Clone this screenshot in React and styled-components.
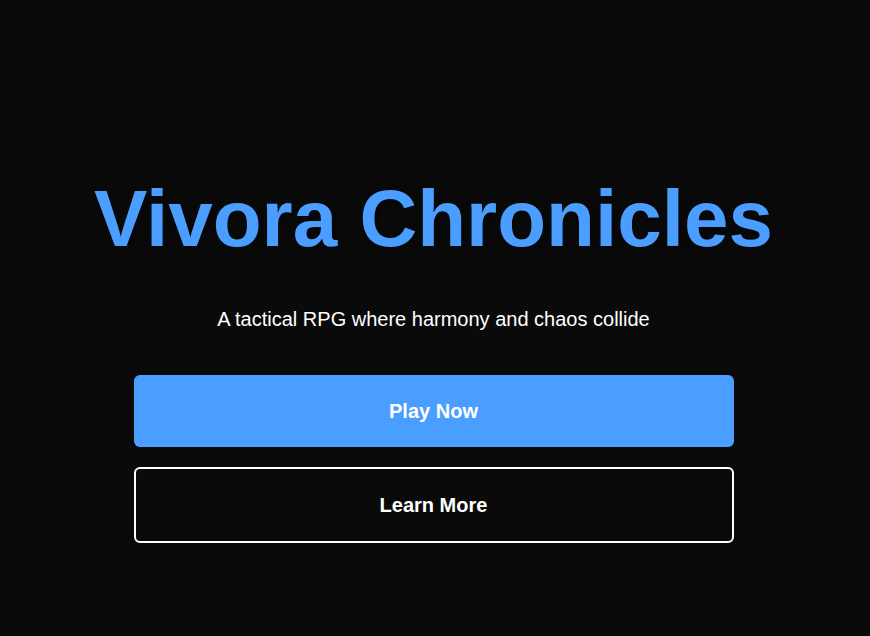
import React from 'react';
import styled, { createGlobalStyle } from 'styled-components';

const GlobalStyle = createGlobalStyle`
  * {
    box-sizing: border-box;
  }
  body {
    margin: 0;
    background: #0a0a0a;
    color: #ffffff;
    font-family: 'Liberation Sans', Arial, sans-serif;
  }
`;

export default function App() {
  return (
    <>
      <GlobalStyle />
      <Landing>
        <Title>Vivora Chronicles</Title>
        <Tagline>A tactical RPG where harmony and chaos collide</Tagline>
        <Actions>
          <ActionButton primary>Play Now</ActionButton>
          <ActionButton>Learn More</ActionButton>
        </Actions>
      </Landing>
    </>
  );
}

const Landing = styled.main`
  min-height: 100vh;
  padding: 80px 3px 0 0;
  display: flex;
  flex-direction: column;
  align-items: center;
  justify-content: center;
  text-align: center;
`;

const Title = styled.h1`
  margin: 0 0 43px;
  font-size: 80px;
  font-weight: bold;
  color: #4a9eff;
  text-shadow: 2px 2px 10px rgba(0, 0, 0, 0.5);
`;

const Tagline = styled.p`
  margin: 0 0 44px;
  font-size: 20px;
  color: #ffffff;
`;

const Actions = styled.div`
  width: 600px;
  display: flex;
  flex-direction: column;
  gap: 20px;
`;

const ActionButton = styled.button`
  width: 100%;
  padding: 24px;
  border-radius: 6px;
  font-family: inherit;
  font-size: 20px;
  line-height: 24px;
  font-weight: bold;
  color: #ffffff;
  cursor: pointer;
  background: ${(p) => (p.primary ? '#4a9eff' : 'transparent')};
  border: ${(p) => (p.primary ? 'none' : '2px solid #ffffff')};
`;
